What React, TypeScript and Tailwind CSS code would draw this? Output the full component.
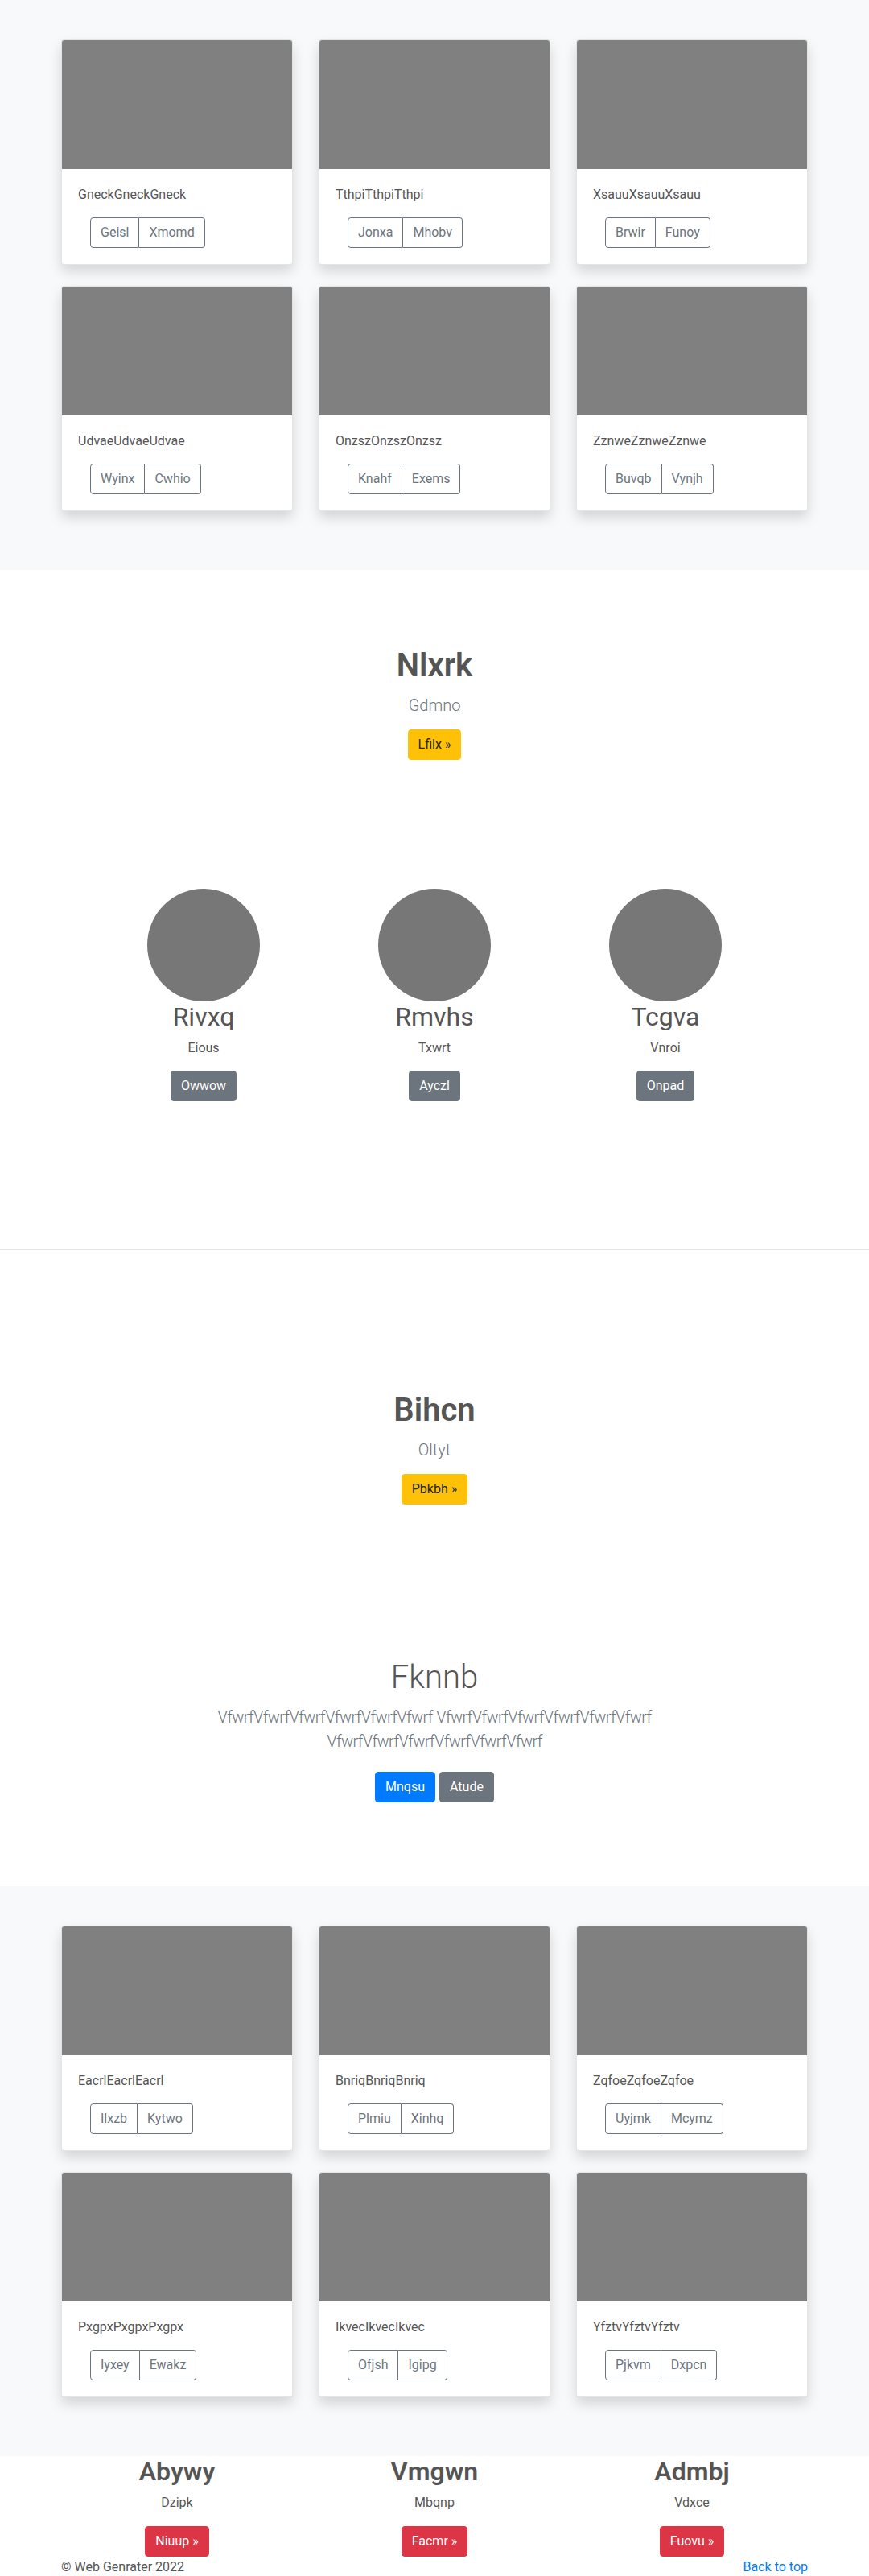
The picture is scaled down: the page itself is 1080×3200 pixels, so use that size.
import React from 'react';

type Card = { title: string; a: string; b: string };

const albumTop: Card[] = [
  { title: 'GneckGneckGneck', a: 'Geisl', b: 'Xmomd' },
  { title: 'TthpiTthpiTthpi', a: 'Jonxa', b: 'Mhobv' },
  { title: 'XsauuXsauuXsauu', a: 'Brwir', b: 'Funoy' },
  { title: 'UdvaeUdvaeUdvae', a: 'Wyinx', b: 'Cwhio' },
  { title: 'OnzszOnzszOnzsz', a: 'Knahf', b: 'Exems' },
  { title: 'ZznweZznweZznwe', a: 'Buvqb', b: 'Vynjh' },
];

const albumBottom: Card[] = [
  { title: 'EacrlEacrlEacrl', a: 'Ilxzb', b: 'Kytwo' },
  { title: 'BnriqBnriqBnriq', a: 'Plmiu', b: 'Xinhq' },
  { title: 'ZqfoeZqfoeZqfoe', a: 'Uyjmk', b: 'Mcymz' },
  { title: 'PxgpxPxgpxPxgpx', a: 'Iyxey', b: 'Ewakz' },
  { title: 'IkvecIkvecIkvec', a: 'Ofjsh', b: 'Igipg' },
  { title: 'YfztvYfztvYfztv', a: 'Pjkvm', b: 'Dxpcn' },
];

const people = [
  { name: 'Rivxq', sub: 'Eious', btn: 'Owwow' },
  { name: 'Rmvhs', sub: 'Txwrt', btn: 'Ayczl' },
  { name: 'Tcgva', sub: 'Vnroi', btn: 'Onpad' },
];

const features = [
  { name: 'Abywy', sub: 'Dzipk', btn: 'Niuup »' },
  { name: 'Vmgwn', sub: 'Mbqnp', btn: 'Facmr »' },
  { name: 'Admbj', sub: 'Vdxce', btn: 'Fuovu »' },
];

const btn = 'inline-block px-3 py-[6px] text-base leading-6 border rounded';

function Album({ cards }: { cards: Card[] }) {
  return (
    <div className="bg-[#f8f9fa] pt-[49px] pb-[73px]">
      <div className="w-[928px] mx-auto grid grid-cols-3 gap-x-8 gap-y-[26px]">
        {cards.map((c) => (
          <div
            key={c.title}
            className="bg-white border border-black/[0.1] rounded overflow-hidden shadow-[0_8px_16px_rgba(0,0,0,0.15)]"
          >
            <div className="h-[160px] bg-[#808080]" />
            <div className="p-5">
              <p className="text-base leading-6 text-[#555]">{c.title}</p>
              <div className="mt-4 ml-[15px] flex">
                <span className={`${btn} rounded-r-none border-[#6c757d] text-[#6c757d]`}>{c.a}</span>
                <span className={`${btn} rounded-l-none border-l-0 border-[#6c757d] text-[#6c757d]`}>{c.b}</span>
              </div>
            </div>
          </div>
        ))}
      </div>
    </div>
  );
}

function Hero({ title, sub, cta }: { title: string; sub: string; cta: string }) {
  return (
    <div className="text-center">
      <h1 className="text-[40px] leading-[48px] font-semibold text-[#555]">{title}</h1>
      <p className="mt-[10px] text-xl leading-[30px] font-light text-[#6c757d]">{sub}</p>
      <span className={`${btn} mt-[15px] bg-[#ffc107] border-[#ffc107] text-[#212529]`}>{cta}</span>
    </div>
  );
}

export default function App() {
  return (
    <div className="[font-family:'Segoe_UI',Roboto,'Liberation_Sans',sans-serif] bg-white text-[#555]">
      <Album cards={albumTop} />

      {/* Hero one */}
      <div className="pt-[95px]">
        <Hero title="Nlxrk" sub="Gdmno" cta="Lfilx »" />
      </div>

      {/* Team circles */}
      <div className="pt-[160px] pb-[184px]">
        <div className="w-[861px] mx-auto grid grid-cols-3">
          {people.map((p) => (
            <div key={p.name} className="flex flex-col items-center text-center">
              <div className="w-[140px] h-[140px] rounded-full bg-[#777]" />
              <h2 className="text-[32px] leading-[38px] font-normal text-[#555]">{p.name}</h2>
              <p className="mt-2 text-base leading-6 text-[#555]">{p.sub}</p>
              <span className={`${btn} mt-4 bg-[#6c757d] border-[#6c757d] text-white`}>{p.btn}</span>
            </div>
          ))}
        </div>
      </div>

      {/* Hero two */}
      <div className="border-t border-[#e5e5e5] pt-[175px]">
        <Hero title="Bihcn" sub="Oltyt" cta="Pbkbh »" />
      </div>

      {/* Jumbotron */}
      <div className="pt-[191px] pb-[104px] text-center">
        <h1 className="text-[40px] leading-[48px] font-light text-[#555]">Fknnb</h1>
        <p className="mt-[10px] mx-auto max-w-[700px] text-xl leading-[30px] font-light tracking-[-0.6px] text-[#6c757d]">
          VfwrfVfwrfVfwrfVfwrfVfwrfVfwrf VfwrfVfwrfVfwrfVfwrfVfwrfVfwrf VfwrfVfwrfVfwrfVfwrfVfwrfVfwrf
        </p>
        <div className="mt-[23px] flex justify-center gap-[5px]">
          <span className={`${btn} bg-[#007bff] border-[#007bff] text-white`}>Mnqsu</span>
          <span className={`${btn} bg-[#6c757d] border-[#6c757d] text-white`}>Atude</span>
        </div>
      </div>

      <Album cards={albumBottom} />

      {/* Feature columns */}
      <div className="w-[960px] mx-auto grid grid-cols-3">
        {features.map((f) => (
          <div key={f.name} className="flex flex-col items-center text-center">
            <h2 className="text-[32px] leading-[38px] font-semibold text-[#555]">{f.name}</h2>
            <p className="mt-2 text-base leading-6 text-[#555]">{f.sub}</p>
            <span className={`${btn} mt-[17px] bg-[#dc3545] border-[#dc3545] text-white`}>{f.btn}</span>
          </div>
        ))}
      </div>

      {/* Footer */}
      <footer className="w-[928px] mx-auto mt-px flex justify-between text-base leading-6">
        <p className="text-[#555]">© Web Genrater 2022</p>
        <a href="#" className="text-[#007bff]">Back to top</a>
      </footer>
    </div>
  );
}
